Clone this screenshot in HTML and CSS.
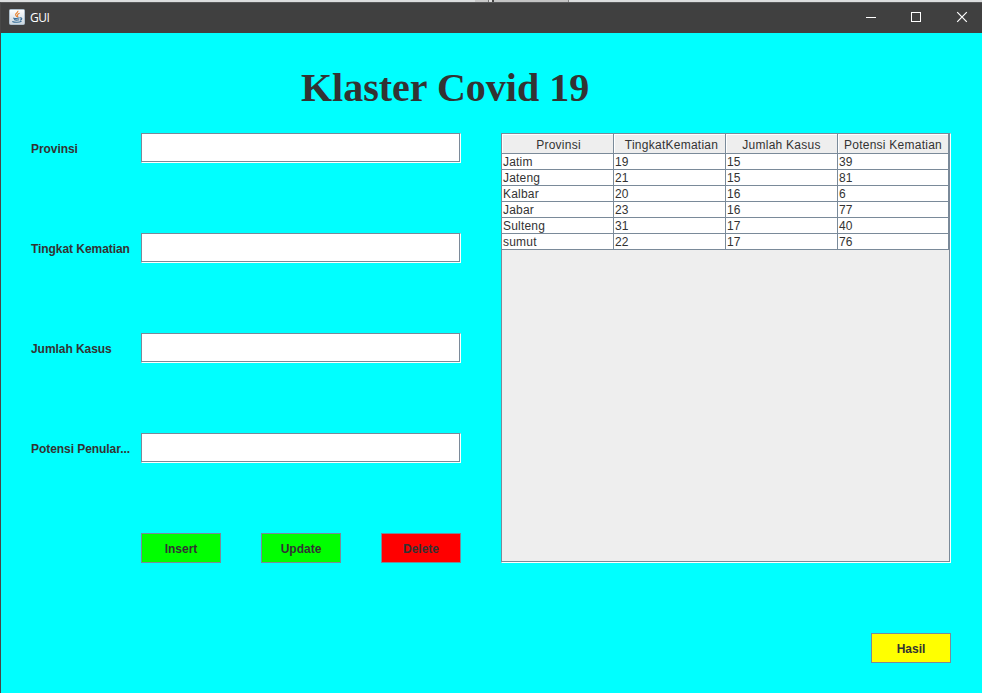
FILE: index.html
```html
<!DOCTYPE html>
<html lang="id">
<head>
<meta charset="utf-8">
<title>GUI</title>
<link rel="stylesheet" href="styles.css">
</head>
<body>
<div class="backdrop"></div>
<div class="window">
  <header class="titlebar">
    <svg class="app-icon" width="16" height="16" viewBox="0 0 16 16">
      <defs><linearGradient id="tile" x1="0" y1="0" x2="0" y2="1"><stop offset="0" stop-color="#fff"/><stop offset="1" stop-color="#cbd6df"/></linearGradient></defs>
      <rect x=".5" y=".5" width="15" height="15" rx="1" fill="url(#tile)" stroke="#aebfcc"/>
      <path d="M8.8 1.8c1 1.6-2.700 2.600-2.200 4.100.2.800 1.100 1.200 1.200 2M10.600 4.300c-1.500.6-2.700 1.300-2 2.400.5.700.3 1.100-.2 1.600" fill="none" stroke="#e88432" stroke-width="1.1"/>
      <path d="M4.200 8.900c1.500.6 4.800.5 6.400-.1M5 10.600c1.400.6 3.700.6 5.200.1M3.300 12.400c2.400 1.300 7 1.100 9.200-.2M11 9c2.300-.5 2.400 1.600 0 2.100" fill="none" stroke="#386f98" stroke-width="1.1"/>
    </svg>
    <span class="app-name">GUI</span>
    <svg class="controls" width="104" height="12" viewBox="0 0 104 12">
      <path d="M0 6.500h10M45.500 1.500h9v9h-9z" fill="none" stroke="#fff" shape-rendering="crispEdges"/>
      <path d="M91.200 1.200l9.600 9.600M100.800 1.200l-9.600 9.600" fill="none" stroke="#fff" stroke-width="1.200"/>
    </svg>
  </header>
  <main class="content">
    <h1>Klaster Covid 19</h1>
    <div class="columns">
      <form class="form">
        <label class="field"><span>Provinsi</span><input type="text"></label>
        <label class="field"><span>Tingkat Kematian</span><input type="text"></label>
        <label class="field"><span>Jumlah Kasus</span><input type="text"></label>
        <label class="field"><span>Potensi Penular...</span><input type="text"></label>
        <div class="actions">
          <button type="button" class="btn green">Insert</button>
          <button type="button" class="btn green">Update</button>
          <button type="button" class="btn red">Delete</button>
        </div>
      </form>
      <div class="scroll-pane">
        <table>
          <colgroup><col class="c"><col class="c"><col class="c"><col class="last"></colgroup>
          <thead><tr><th class="first">Provinsi</th><th class="wide">TingkatKematian</th><th>Jumlah Kasus</th><th>Potensi Kematian</th></tr></thead>
          <tbody>
            <tr><td>Jatim</td><td>19</td><td>15</td><td>39</td></tr>
            <tr><td>Jateng</td><td>21</td><td>15</td><td>81</td></tr>
            <tr><td>Kalbar</td><td>20</td><td>16</td><td>6</td></tr>
            <tr><td>Jabar</td><td>23</td><td>16</td><td>77</td></tr>
            <tr><td>Sulteng</td><td>31</td><td>17</td><td>40</td></tr>
            <tr><td>sumut</td><td>22</td><td>17</td><td>76</td></tr>
          </tbody>
        </table>
      </div>
    </div>
    <div class="footer"><button type="button" class="btn yellow">Hasil</button></div>
  </main>
</div>
</body>
</html>
```
FILE: styles.css
```css
* { box-sizing: border-box; }
body {
  margin: 0;
  height: 693px;
  overflow: hidden;
  font: 12px "Liberation Sans", Arial, sans-serif;
  color: #333;
}
.backdrop {
  height: 2px;
  background: linear-gradient(90deg, #dcdedf 0 475px, #c8c8c8 475px 488px, #777 488px 489px, #ddd 489px 492px, #444 492px 494px, #c4c4c4 494px 568px, #888 568px 569px, #dcdedf 569px);
}
.window {
  height: 691px;
  border-top: 1px solid #58595a;
  border-left: 1px solid #484848;
  background: #0ff;
}
.titlebar {
  height: 30px;
  display: flex;
  align-items: center;
  padding: 0 12px 0 8px;
  background: #404040;
  color: #fff;
}
.app-icon { display: block; margin-top: -2px; }
.app-name {
  margin: -1px auto 0 5px;
  font: 12px "Open Sans", "Noto Sans", sans-serif;
  letter-spacing: -0.5px;
}
.controls { display: block; margin-top: -2px; }
.content { padding: 30px 31px 0 30px; }
h1 {
  margin: 0 0 0 270px;
  height: 70px;
  padding-top: 2px;
  font: bold 40px/46px "Liberation Serif", "Times New Roman", serif;
  white-space: nowrap;
}
.columns { display: flex; justify-content: space-between; height: 430px; }
.form { display: flex; flex-direction: column; gap: 70px; width: 430px; }
.field { display: flex; align-items: center; height: 30px; font-weight: bold; }
.field span { width: 110px; padding-top: 2px; letter-spacing: -0.06px; white-space: nowrap; }
.field input {
  width: 320px;
  height: 30px;
  padding: 0;
  border: 1px solid #7a8a99;
  border-right-color: #fff;
  border-bottom-color: #fff;
  border-radius: 0;
  background: #fff;
  box-shadow: inset -1px -1px #7a8a99;
  outline: none;
}
.actions { display: flex; gap: 40px; padding-left: 110px; }
.btn {
  width: 80px;
  height: 30px;
  padding: 1px 0 0;
  border: 1px solid #7a8a99;
  border-radius: 0;
  font: bold 12px "Liberation Sans", Arial, sans-serif;
  color: #333;
}
.green { background: #0f0; }
.red { background: #f00; }
.yellow { background: #ff0; }
.scroll-pane {
  width: 450px;
  height: 430px;
  border: 1px solid #7a8a99;
  border-right-color: #fff;
  border-bottom-color: #fff;
  background: #eee;
  box-shadow: inset -1px -1px #7a8a99;
}
table { width: 447px; table-layout: fixed; border-collapse: separate; border-spacing: 0; }
.c { width: 112px; }
.last { width: 111px; }
th, td {
  padding: 0;
  border-right: 1px solid #7a8a99;
  border-bottom: 1px solid #7a8a99;
  white-space: nowrap;
}
th {
  height: 20px;
  padding-top: 3px;
  font-weight: normal;
  letter-spacing: 0.25px;
  line-height: 16px;
  background: #eee;
  box-shadow: inset 1px 1px #fff;
}
.first { padding-left: 2px; }
.wide { padding-left: 4px; }
td {
  height: 16px;
  padding: 1px 0 0 1px;
  letter-spacing: 0.2px;
  line-height: 14px;
  text-align: left;
  background: #fff;
}
.footer { display: flex; justify-content: flex-end; padding-top: 70px; }
```
